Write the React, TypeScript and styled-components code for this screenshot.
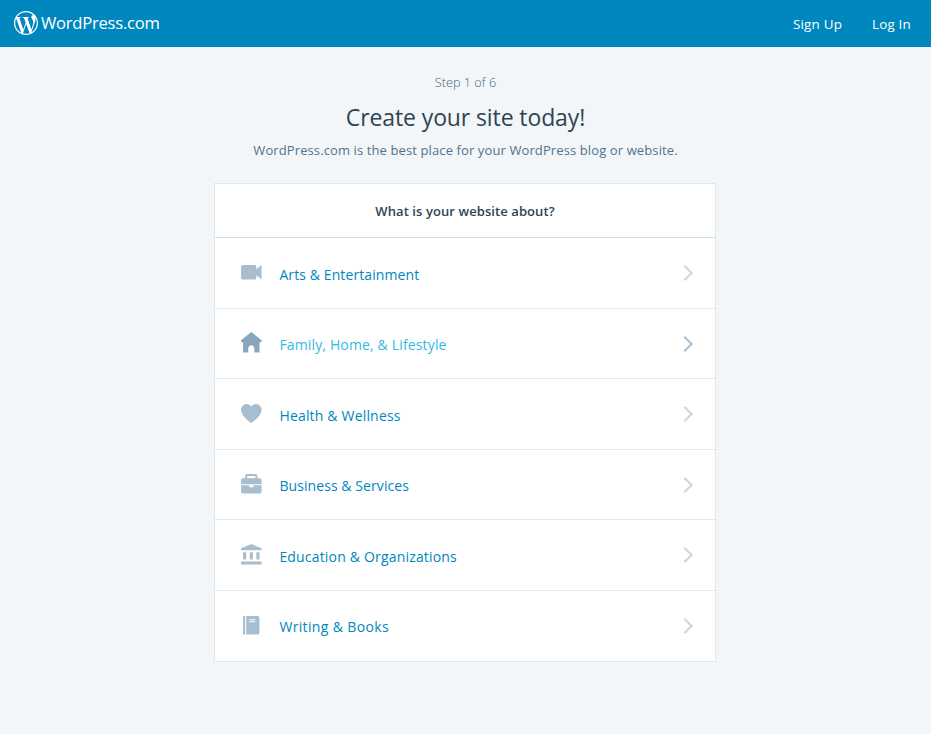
import React from 'react';
import styled, { createGlobalStyle } from 'styled-components';
import { SiWordpress } from 'react-icons/si';

const GlobalStyle = createGlobalStyle`
  * { box-sizing: border-box; }
  body {
    margin: 0;
    min-height: 100vh;
    background: #f3f6f8;
    color: #2e4453;
    font-family: "Open Sans", "Noto Sans", sans-serif;
  }
`;

const Masthead = styled.header`
  height: 47px;
  padding: 0 20px 0 14px;
  background: #0087be;
  color: #fff;
  display: flex;
  align-items: center;
  justify-content: space-between;
`;

const Brand = styled.a`
  display: flex;
  align-items: center;
  gap: 3px;
  padding-bottom: 1px;
  font-size: 16.6px;
  font-weight: 400;
  line-height: 24px;
  letter-spacing: -0.25px;
`;

const Nav = styled.nav`
  display: flex;
  gap: 30px;
  font-size: 13.4px;
  line-height: 20px;
  letter-spacing: 0.2px;
  padding-top: 1px;
`;

const NavLink = styled.a<{ $width: number }>`
  width: ${(p) => p.$width}px;
  white-space: nowrap;
`;

const Intro = styled.section`
  height: 136px;
  padding-top: 25px;
  display: flex;
  flex-direction: column;
  align-items: center;
  white-space: nowrap;
`;

const Step = styled.div`
  font-size: 12.7px;
  font-weight: 300;
  line-height: 20px;
  color: #3d6480;
`;

const Title = styled.h1`
  margin: 7px 0 0;
  font-size: 23px;
  font-weight: 400;
  line-height: 36px;
  letter-spacing: -0.11px;
`;

const Subtitle = styled.p`
  margin: 5px 0 0;
  font-size: 13px;
  line-height: 20px;
  letter-spacing: 0.11px;
  color: #4f748e;
`;

const Card = styled.main`
  width: 502px;
  margin: 0 0 0 214px;
  background: #fff;
  border: 1px solid #dfe7ed;
`;

const CardHeader = styled.h2`
  height: 54px;
  margin: 0;
  border-bottom: 1px solid #d0dfe6;
  font-size: 13px;
  font-weight: 600;
  line-height: 54px;
  letter-spacing: 0.08px;
  text-align: center;
`;

const TopicList = styled.ul`
  list-style: none;
  margin: 0;
  padding: 0;
`;

const TopicIcon = styled.svg<{ $active: boolean }>`
  width: 24.6px;
  height: 24.6px;
  flex: none;
  fill: ${(p) => (p.$active ? '#87a6bc' : '#a8bece')};
`;

const TopicLabel = styled.span<{ $spacing: number }>`
  flex: 1;
  margin-left: 15.7px;
  padding-top: 4px;
  font-size: 14px;
  line-height: 22px;
  letter-spacing: ${(p) => p.$spacing}px;
  white-space: nowrap;
`;

const Topic = styled.li<{ $active: boolean }>`
  height: 71px;
  padding: 22px 15.7px 0 24.1px;
  display: flex;
  align-items: flex-start;
  color: ${(p) => (p.$active ? '#33b9e3' : '#0087be')};
  border-bottom: 1px solid #e0e8ee;

  &:nth-child(even) { height: 70px; }
  &:nth-child(even) ${TopicLabel} { padding-top: 3px; }
  &:last-child { border-bottom: 0; }
`;

const Chevron = styled.svg<{ $active: boolean }>`
  width: 24px;
  height: 24px;
  flex: none;
  margin-top: 1px;
  fill: ${(p) => (p.$active ? '#a8bece' : '#c8d7e1')};
`;

const topics = [
  {
    label: 'Arts & Entertainment',
    spacing: 0.1,
    icon: 'M17 9V7c0-1.105-.895-2-2-2H4c-1.105 0-2 .895-2 2v10c0 1.105.895 2 2 2h11c1.105 0 2-.895 2-2v-2l5 4V5l-5 4z',
  },
  {
    label: 'Family, Home, & Lifestyle',
    spacing: 0.15,
    active: true,
    icon: 'M22 9L12 1 2 9v2h2v10h5v-4c0-1.657 1.343-3 3-3s3 1.343 3 3v4h5V11h2V9z',
  },
  {
    label: 'Health & Wellness',
    spacing: 0.18,
    icon: 'M16.5 3c-1.862 0-3.505.928-4.5 2.344C11.005 3.928 9.362 3 7.5 3 4.462 3 2 5.462 2 8.5c0 5.719 6.5 10.438 10 12.85 3.5-2.412 10-7.131 10-12.85C22 5.462 19.538 3 16.5 3z',
  },
  {
    label: 'Business & Services',
    spacing: 0.08,
    icon: 'M14 15h-4v-2H2v6c0 1.105.895 2 2 2h16c1.105 0 2-.895 2-2v-6h-8v2zm6-9h-2V4c0-1.105-.895-2-2-2H8c-1.105 0-2 .895-2 2v2H4c-1.105 0-2 .895-2 2v4h20V8c0-1.105-.895-2-2-2zm-4 0H8V4h8v2z',
  },
  {
    label: 'Education & Organizations',
    spacing: 0.18,
    icon: 'M2 19h20v3H2zM12 2L2 6v2h20V6zM17 10h3v7h-3zM10.5 10h3v7h-3zM4 10h3v7H4z',
  },
  {
    label: 'Writing & Books',
    spacing: 0.35,
    icon: 'M4 3h2v18H4zM18 3H7v18h11c1.105 0 2-.895 2-2V5c0-1.105-.895-2-2-2zm-2 6h-6V8h6v1zm0-2h-6V6h6v1z',
  },
];

export default function App() {
  return (
    <>
      <GlobalStyle />
      <Masthead>
        <Brand>
          <SiWordpress size={24} />
          WordPress.com
        </Brand>
        <Nav>
          <NavLink $width={49}>Sign Up</NavLink>
          <NavLink $width={39}>Log In</NavLink>
        </Nav>
      </Masthead>
      <Intro>
        <Step>Step 1 of 6</Step>
        <Title>Create your site today!</Title>
        <Subtitle>WordPress.com is the best place for your WordPress blog or website.</Subtitle>
      </Intro>
      <Card>
        <CardHeader>What is your website about?</CardHeader>
        <TopicList>
          {topics.map(({ label, spacing, icon, active = false }) => (
            <Topic key={label} $active={active}>
              <TopicIcon $active={active} viewBox="0 0 24 24">
                <path d={icon} />
              </TopicIcon>
              <TopicLabel $spacing={spacing}>{label}</TopicLabel>
              <Chevron $active={active} viewBox="0 0 24 24">
                <path d="M10 20l-1.414-1.414L15.172 12 8.586 5.414 10 4l8 8-8 8z" />
              </Chevron>
            </Topic>
          ))}
        </TopicList>
      </Card>
    </>
  );
}
